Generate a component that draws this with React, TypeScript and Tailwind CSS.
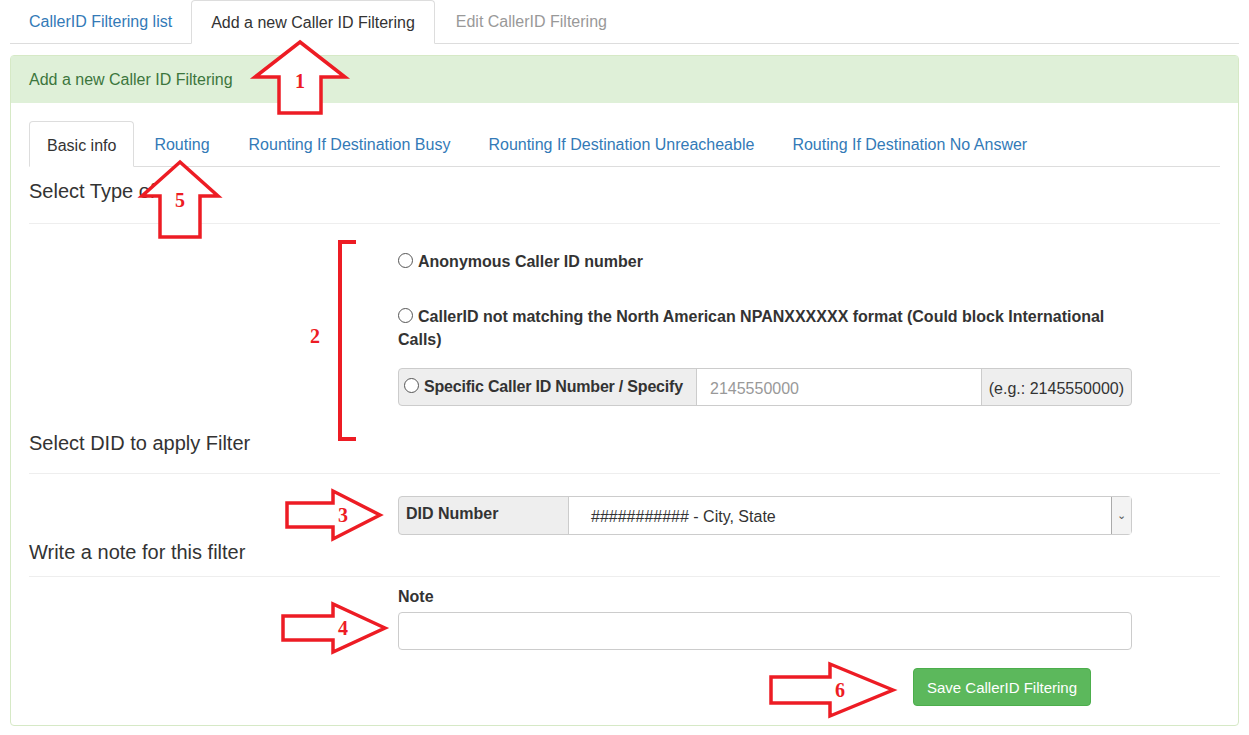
import React from "react";

const F = { fontFamily: '"Liberation Sans", Arial, sans-serif' };
const R = "#ed1c24";

function Up({ x, tipY, halfHead, halfShaft, headY, bottom, num }: any) {
  const pts = `${x},${tipY} ${x + halfHead},${headY} ${x + halfShaft},${headY} ${x + halfShaft},${bottom} ${x - halfShaft},${bottom} ${x - halfShaft},${headY} ${x - halfHead},${headY}`;
  return (
    <>
      <polygon points={pts} fill="white" stroke={R} strokeWidth="3.5" strokeLinejoin="miter" />
      <text x={x} y={headY + 11} textAnchor="middle" fill={R} fontSize="20" fontWeight="bold" fontFamily="Liberation Serif, serif">{num}</text>
    </>
  );
}
function Right({ left, tipX, y, halfHead, halfShaft, headX, num }: any) {
  const pts = `${tipX},${y} ${headX},${y - halfHead} ${headX},${y - halfShaft} ${left},${y - halfShaft} ${left},${y + halfShaft} ${headX},${y + halfShaft} ${headX},${y + halfHead}`;
  return (
    <>
      <polygon points={pts} fill="white" stroke={R} strokeWidth="3.5" />
      <text x={headX + 10} y={y + 7} textAnchor="middle" fill={R} fontSize="20" fontWeight="bold" fontFamily="Liberation Serif, serif">{num}</text>
    </>
  );
}

function Radio() {
  return <span className="inline-block w-[15px] h-[15px] rounded-full border border-[#555] bg-white mr-[5px] relative top-[1px]" />;
}

export default function App() {
  return (
    <div style={F} className="relative w-[1249px] h-[735px] bg-white text-[#333] text-[16px] overflow-hidden">
      <div className="mx-[10px] flex border-b border-[#ddd] h-[44px]">
        <div className="px-[19px] pt-[10px] text-[#337ab7]">CallerID Filtering list</div>
        <div className="px-[19px] pt-[10px] border border-[#ddd] border-b-white bg-white -mb-px rounded-t">Add a new Caller ID Filtering</div>
        <div className="px-[21px] pt-[10px] text-[#999]">Edit CallerID Filtering</div>
      </div>
      <div className="mx-[10px] mt-[11px] h-[671px] border border-[#d6e9c6] rounded">
        <div className="bg-[#dff0d8] text-[#3c763d] h-[47px] px-[18px] pt-[12px]">Add a new Caller ID Filtering</div>
        <div className="px-[18px]">
          <div className="mt-[18px] flex border-b border-[#ddd] h-[46px]">
            <div className="px-[17px] pt-[12px] border border-[#ddd] border-b-white bg-white -mb-px rounded-t">Basic info</div>
            <div className="px-[20px] pt-[12px] text-[#337ab7]">Routing</div>
            <div className="px-[19px] pt-[12px] text-[#337ab7]">Rounting If Destination Busy</div>
            <div className="px-[19px] pt-[12px] text-[#337ab7]">Rounting If Destination Unreacheable</div>
            <div className="px-[19px] pt-[12px] text-[#337ab7]">Routing If Destination No Answer</div>
          </div>
          <div className="text-[20px] h-[57px] pt-[9px] border-b border-[#eee]">Select Type of filter</div>
          <div className="h-[204px] pl-[369px] pr-[88px] pt-[26px] font-bold">
            <div className="h-[24px]"><Radio />Anonymous Caller ID number</div>
            <div className="mt-[31px] leading-[23px] max-w-[712px]"><Radio />CallerID not matching the North American NPANXXXXXX format (Could block International Calls)</div>
            <div className="mt-[17px] flex h-[38px] border border-[#ccc] rounded bg-[#eee]">
              <div className="px-[5px] pt-[6px] w-[298px] border-r border-[#ccc] whitespace-nowrap tracking-[-0.2px]"><Radio />Specific Caller ID Number / Specify</div>
              <div className="flex-1 bg-white px-[13px] pt-[8px] font-normal text-[#999]">2145550000</div>
              <div className="px-[7px] pt-[8px] font-normal border-l border-[#ccc] whitespace-nowrap">(e.g.: 2145550000)</div>
            </div>
          </div>
          <div className="text-[20px] h-[46px] border-b border-[#eee]">Select DID to apply Filter</div>
          <div className="h-[62px] pl-[369px] pr-[88px] pt-[22px]">
            <div className="flex h-[39px] border border-[#ccc] rounded bg-[#eee]">
              <div className="px-[7px] pt-[5px] w-[170px] border-r border-[#ccc] font-bold">DID Number</div>
              <div className="flex-1 bg-white pl-[22px] pt-[8px]">########### - City, State</div>
              <div className="w-[20px] border-l border-[#aaa] bg-[#f3f3f3] flex items-center justify-center text-[11px] text-[#555]">&#8964;</div>
            </div>
          </div>
          <div className="text-[20px] h-[41px] pt-[1px] border-b border-[#eee]">Write a note for this filter</div>
          <div className="pl-[369px] pr-[88px] pt-[8px]">
            <div className="font-bold h-[20px]">Note</div>
            <div className="mt-[7px] h-[38px] border border-[#ccc] rounded" />
            <div className="flex justify-end mt-[18px] pr-[41px]">
              <div className="bg-[#5cb85c] border border-[#4cae4c] text-white rounded px-[13px] h-[38px] pt-[8px] text-[15px]">Save CallerID Filtering</div>
            </div>
          </div>
        </div>
      </div>
      <svg className="absolute left-0 top-0 pointer-events-none" width="1249" height="735">
        <Up x={300} tipY={42} halfHead={45} halfShaft={21} headY={77} bottom={113} num="1" />
        <Up x={180} tipY={162} halfHead={38} halfShaft={20} headY={196} bottom={237} num="5" />
        <path d={`M356 242 H340 V439 H356`} fill="none" stroke={R} strokeWidth="4" />
        <text x={315} y={343} textAnchor="middle" fill={R} fontSize="20" fontWeight="bold" fontFamily="Liberation Serif, serif">2</text>
        <Right left={287} tipX={380} y={515} halfHead={24} halfShaft={12} headX={333} num="3" />
        <Right left={283} tipX={385} y={628} halfHead={24} halfShaft={12} headX={333} num="4" />
        <Right left={771} tipX={893} y={690} halfHead={26} halfShaft={13} headX={830} num="6" />
      </svg>
    </div>
  );
}
